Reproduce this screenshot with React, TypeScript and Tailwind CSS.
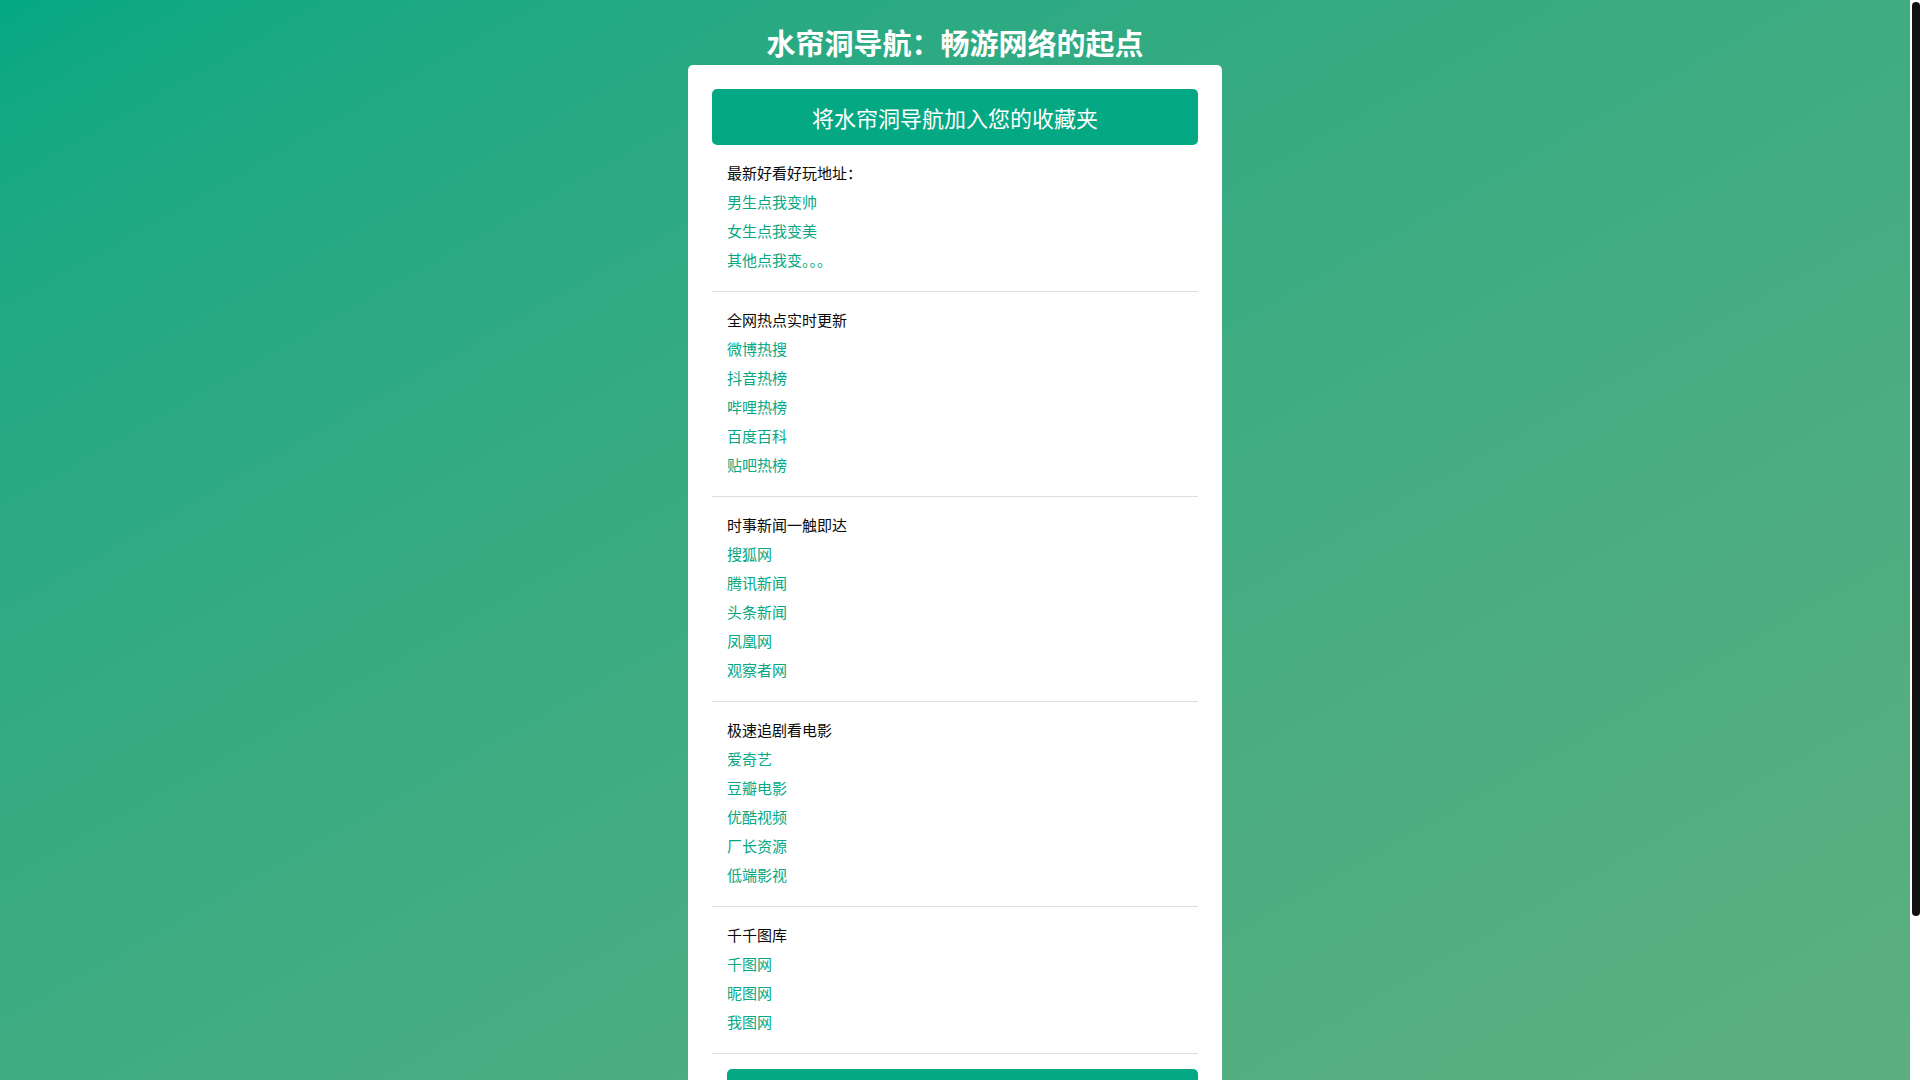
import React from "react";

type Section = { title: string; links: string[] };

const sections: Section[] = [
  { title: "最新好看好玩地址：", links: ["男生点我变帅", "女生点我变美", "其他点我变。。。"] },
  { title: "全网热点实时更新", links: ["微博热搜", "抖音热榜", "哔哩热榜", "百度百科", "贴吧热榜"] },
  { title: "时事新闻一触即达", links: ["搜狐网", "腾讯新闻", "头条新闻", "凤凰网", "观察者网"] },
  { title: "极速追剧看电影", links: ["爱奇艺", "豆瓣电影", "优酷视频", "厂长资源", "低端影视"] },
  { title: "千千图库", links: ["千图网", "昵图网", "我图网"] },
];

export default function App() {
  return (
    <div
      className="flex h-screen w-full overflow-hidden"
      style={{ fontFamily: '"Noto Sans CJK SC", "Noto Sans", "Liberation Sans", sans-serif' }}
    >
      <div className="min-w-0 flex-1 overflow-hidden bg-linear-to-br from-[#03a883] to-[#5caf80]">
        <div className="flex flex-col items-center pt-[24px] pb-[134px]">
          <h1 className="text-[29px] leading-[36px] font-bold text-white">水帘洞导航：畅游网络的起点</h1>
          <div className="mt-[5px] w-[534px] shrink-0 rounded-[5px] bg-white px-[24px] pt-[24px] pb-[24px]">
            <div className="flex h-[56px] items-center justify-center rounded-[5px] bg-[#04a984] text-[22px] text-white">
              将水帘洞导航加入您的收藏夹
            </div>
            {sections.map((s) => (
              <div key={s.title} className="border-b border-[#dedede] pt-[13px] pb-[17px] px-[15px]">
                <div className="h-[29px] text-[15px] leading-[29px] text-[#0a0a0a]">{s.title}</div>
                {s.links.map((l) => (
                  <a key={l} href="#" className="block h-[29px] text-[15px] leading-[29px] text-[#06a783]">
                    {l}
                  </a>
                ))}
              </div>
            ))}
            <div className="ml-[15px] mt-[15px] h-[46px] rounded-[5px] bg-[#04a984]"></div>
          </div>
        </div>
      </div>
      <div className="flex w-[10px] shrink-0 flex-col bg-white pt-[2px] pl-[2px]">
        <div className="h-[914px] rounded-[4px] bg-[#111111]"></div>
      </div>
    </div>
  );
}
